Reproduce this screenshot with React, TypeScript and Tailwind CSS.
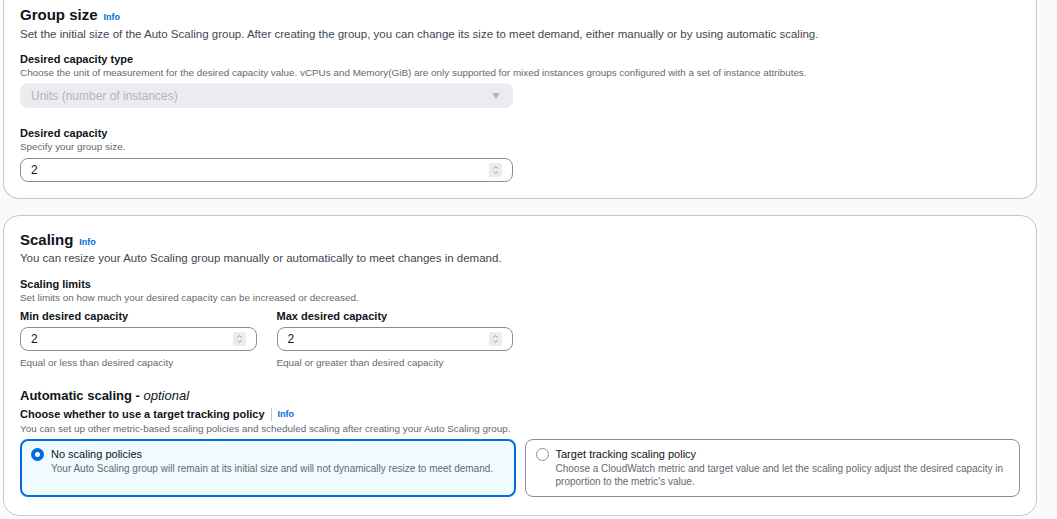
import React from "react";

const FONT = { fontFamily: '"Liberation Sans", Arial, sans-serif' };

function Info() {
  return <span className="text-[9px] font-bold text-[#006ce0] leading-none">Info</span>;
}

function Spinner() {
  return (
    <svg width="13" height="14" viewBox="0 0 13 14" className="shrink-0">
      <rect width="13" height="14" rx="1" fill="#ebebf0" />
      <path d="M4.5 5.5 L6.5 3.5 L8.5 5.5" fill="none" stroke="#8c8c94" strokeWidth="0.9" />
      <path d="M4.5 8.5 L6.5 10.5 L8.5 8.5" fill="none" stroke="#8c8c94" strokeWidth="0.9" />
    </svg>
  );
}

function NumberInput({ value }: { value: string }) {
  return (
    <div className="flex h-[24px] items-center justify-between rounded-lg border border-[#8c8c94] bg-white pl-[10px] pr-[10px]">
      <span className="text-[12px] text-[#0f141a]">{value}</span>
      <Spinner />
    </div>
  );
}

function Label({ children }: { children: React.ReactNode }) {
  return <div className="text-[11px] font-bold leading-[14px] text-[#0f141a]">{children}</div>;
}

function Hint({ children }: { children: React.ReactNode }) {
  return <div className="text-[9.9px] leading-[14px] text-[#656871]">{children}</div>;
}

export default function App() {
  return (
    <div style={FONT} className="min-h-screen w-[1057px] bg-[#fafafa] pl-[3px] pr-[20px]">
      {/* Group size card (top is scrolled out of view) */}
      <div className="rounded-b-2xl border-x border-b border-[#c6c6cd] bg-white px-4 pt-[5px] pb-4">
        <div className="flex items-baseline gap-[6px] leading-[20px]">
          <h2 className="text-[15px] font-bold text-[#0f141a]">Group size</h2>
          <Info />
        </div>
        <p className="mt-[1px] text-[11.5px] leading-[16px] text-[#424650]">
          Set the initial size of the Auto Scaling group. After creating the group, you can change its size to meet demand, either manually or by using automatic scaling.
        </p>

        <div className="mt-[10px]">
          <Label>Desired capacity type</Label>
          <Hint>
            Choose the unit of measurement for the desired capacity value. vCPUs and Memory(GiB) are only supported for mixed instances groups configured with a set of instance attributes.
          </Hint>
          <div className="mt-[3px] flex h-[25px] w-[493px] items-center justify-between rounded-lg bg-[#ebebf0] pl-[11px] pr-[13px]">
            <span className="text-[12px] text-[#b4b4bb]">Units (number of instances)</span>
            <svg width="8" height="6" viewBox="0 0 8 6">
              <path d="M0 0 H8 L4 6 Z" fill="#b4b4bb" />
            </svg>
          </div>
        </div>

        <div className="mt-[18px] w-[493px]">
          <Label>Desired capacity</Label>
          <Hint>Specify your group size.</Hint>
          <div className="mt-[4px]">
            <NumberInput value="2" />
          </div>
        </div>
      </div>

      {/* Scaling card */}
      <div className="mt-[16px] rounded-2xl border border-[#c6c6cd] bg-white px-4 pt-[14px] pb-[18px]">
        <div className="flex items-baseline gap-[6px] leading-[20px]">
          <h2 className="text-[15px] font-bold text-[#0f141a]">Scaling</h2>
          <Info />
        </div>
        <p className="text-[11.5px] leading-[16px] text-[#424650]">
          You can resize your Auto Scaling group manually or automatically to meet changes in demand.
        </p>

        <div className="mt-[11px]">
          <Label>Scaling limits</Label>
          <Hint>Set limits on how much your desired capacity can be increased or decreased.</Hint>
        </div>

        <div className="mt-[4px] grid w-[493px] grid-cols-2 gap-5">
          <div>
            <Label>Min desired capacity</Label>
            <div className="mt-[4px]">
              <NumberInput value="2" />
            </div>
            <div className="mt-[5px]">
              <Hint>Equal or less than desired capacity</Hint>
            </div>
          </div>
          <div>
            <Label>Max desired capacity</Label>
            <div className="mt-[4px]">
              <NumberInput value="2" />
            </div>
            <div className="mt-[5px]">
              <Hint>Equal or greater than desired capacity</Hint>
            </div>
          </div>
        </div>

        <div className="mt-[18px] text-[13px] leading-[16px] text-[#0f141a]">
          <span className="font-bold">Automatic scaling - </span>
          <span className="italic">optional</span>
        </div>
        <div className="mt-[3px] flex items-center">
          <Label>Choose whether to use a target tracking policy</Label>
          <span className="mx-[6px] h-[13px] w-px bg-[#c6c6cd]" />
          <Info />
        </div>
        <div className="mt-[1px]">
          <Hint>You can set up other metric-based scaling policies and scheduled scaling after creating your Auto Scaling group.</Hint>
        </div>

        <div className="mt-[3px] grid grid-cols-2 gap-[9px]">
          <div className="flex h-[58px] gap-[7px] rounded-lg border-2 border-[#006ce0] bg-[#f0fbff] pl-[9px] pt-[5px]">
            <span className="mt-[2px] h-[13px] w-[13px] shrink-0 rounded-full border-[4px] border-[#006ce0] bg-white" />
            <div>
              <div className="text-[11px] leading-[16px] text-[#0f141a]">No scaling policies</div>
              <div className="text-[10px] leading-[13px] text-[#656871]">
                Your Auto Scaling group will remain at its initial size and will not dynamically resize to meet demand.
              </div>
            </div>
          </div>
          <div className="flex h-[58px] gap-[7px] rounded-lg border border-[#8c8c94] bg-white pl-[10px] pr-[6px] pt-[6px]">
            <span className="mt-[2px] h-[13px] w-[13px] shrink-0 rounded-full border border-[#8c8c94] bg-white" />
            <div>
              <div className="text-[11px] leading-[16px] text-[#0f141a]">Target tracking scaling policy</div>
              <div className="text-[10px] leading-[13px] text-[#656871]">
                Choose a CloudWatch metric and target value and let the scaling policy adjust the desired capacity in proportion to the metric's value.
              </div>
            </div>
          </div>
        </div>
      </div>
    </div>
  );
}
